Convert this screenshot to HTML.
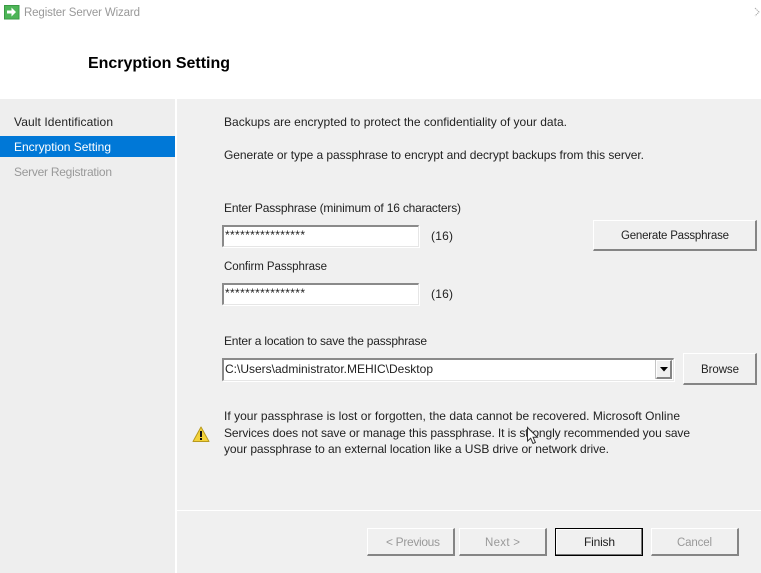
<!DOCTYPE html>
<html><head><meta charset="utf-8"><title>Register Server Wizard</title>
<style>
html,body{margin:0;padding:0;background:#fff}
body{width:761px;height:573px;overflow:hidden;position:relative;font-family:"Liberation Sans",sans-serif}
#w{position:absolute;left:0;top:0;width:761px;height:573px;filter:blur(.3px)}
#w div{position:absolute;box-sizing:border-box}
.field{background:#fff;border-top:2px solid #8a8a8a;border-left:2px solid #8a8a8a;border-right:1px solid #e6e6e6;border-bottom:1px solid #e6e6e6;box-shadow:1px 1px 0 #fff}
.btn{background:#f0f0f0;border-top:1px solid #fff;border-left:1px solid #fff;border-right:2px solid #858585;border-bottom:2px solid #858585}
svg{position:absolute;left:0;top:0}
text{font-family:"Liberation Sans",sans-serif;font-size:12px;fill:#222}
.s{font-size:11.5px}
</style></head><body><div id="w">
<div style="left:0;top:99px;width:175px;height:474px;background:#eeeeee"></div>
<div style="left:177px;top:99px;width:584px;height:474px;background:#f0f0f0"></div>
<div style="left:0;top:136px;width:175px;height:21px;background:#0078d7"></div>
<div style="left:177px;top:510px;width:584px;height:1px;background:#fff"></div>

<div class="field" style="left:222px;top:225px;width:197px;height:22px"></div>
<div class="field" style="left:222px;top:283px;width:197px;height:22px"></div>
<div class="field" style="left:222px;top:358px;width:452px;height:23px"></div>
<div style="left:656px;top:360px;width:16px;height:19px;background:#f0f0f0;border:1px solid #fff;border-right:2px solid #858585;border-bottom:2px solid #858585;box-shadow:-1px 0 0 #c4c4c4"></div>

<div class="btn" style="left:593px;top:220px;width:164px;height:31px"></div>
<div class="btn" style="left:683px;top:353px;width:74px;height:32px"></div>
<div class="btn" style="left:367px;top:528px;width:88px;height:28px"></div>
<div class="btn" style="left:459px;top:528px;width:88px;height:28px"></div>
<div style="left:555px;top:528px;width:88px;height:28px;background:#f0f0f0;border:1px solid #000;box-shadow:inset -1px -1px 0 #777,inset 1px 1px 0 #fff"></div>
<div class="btn" style="left:651px;top:528px;width:88px;height:28px"></div>

<svg width="761" height="573" viewBox="0 0 761 573">
  <rect x="4.500" y="5.500" width="14.500" height="13.500" fill="#4db557" stroke="#3a9a44"/>
  <path d="M7 10.500h4.500V7.500l4.500 4.500-4.500 4.500v-3H7z" fill="#fff"/>
  <text x="24" y="16" textLength="116" class="s" style="fill:#999">Register Server Wizard</text>
  <path d="M755 8l4 4-4 4" fill="none" stroke="#aaa" stroke-width="1" stroke-dasharray="1.500 .7"/>
  <text x="88" y="68" textLength="142" style="font-size:16px;font-weight:bold;fill:#000">Encryption Setting</text>

  <text x="14" y="126" textLength="99">Vault Identification</text>
  <text x="14" y="151" textLength="97" style="fill:#fff">Encryption Setting</text>
  <text x="14" y="176" textLength="98" style="fill:#999">Server Registration</text>

  <text x="224" y="126" textLength="343">Backups are encrypted to protect the confidentiality of your data.</text>
  <text x="224" y="159" textLength="420">Generate or type a passphrase to encrypt and decrypt backups from this server.</text>
  <text x="224" y="212" textLength="237">Enter Passphrase (minimum of 16 characters)</text>
  <text x="225" y="239" textLength="80">****************</text>
  <text x="431" y="240" textLength="22">(16)</text>
  <text x="224" y="270" textLength="103" class="s">Confirm Passphrase</text>
  <text x="225" y="297" textLength="80">****************</text>
  <text x="431" y="298" textLength="22">(16)</text>
  <text x="224" y="345" textLength="203">Enter a location to save the passphrase</text>
  <text x="225" y="373" textLength="208">C:\Users\administrator.MEHIC\Desktop</text>
  <text x="621" y="239" textLength="108" class="s">Generate Passphrase</text>
  <text x="701" y="373" textLength="38" class="s">Browse</text>
  <path d="M660 367h8l-4 4.500z" fill="#000"/>

  <path d="M201 427l8 14.500H193z" fill="#f3d23a" stroke="#b89a1e" stroke-linejoin="round"/>
  <rect x="200" y="431" width="2" height="6" fill="#111"/>
  <rect x="200" y="438" width="2" height="2" fill="#111"/>

  <text x="224" y="420" textLength="456">If your passphrase is lost or forgotten, the data cannot be recovered. Microsoft Online</text>
  <text x="224" y="437" textLength="466">Services does not save or manage this passphrase. It is strongly recommended you save</text>
  <text x="224" y="453" textLength="385">your passphrase to an external location like a USB drive or network drive.</text>

  <text x="386" y="546" textLength="54" style="fill:#999">&lt; Previous</text>
  <text x="485" y="546" textLength="35" class="s" style="fill:#999">Next &gt;</text>
  <text x="584" y="546" textLength="31">Finish</text>
  <text x="677" y="546" textLength="35" class="s" style="fill:#999">Cancel</text>

  <path d="M527.500 427.500v13.500l3.200-2.800 2.300 5.300 2.400-1-2.300-5.200h4.200z" fill="#fff" stroke="#333" stroke-width="1"/>
</svg>
</div></body></html>
